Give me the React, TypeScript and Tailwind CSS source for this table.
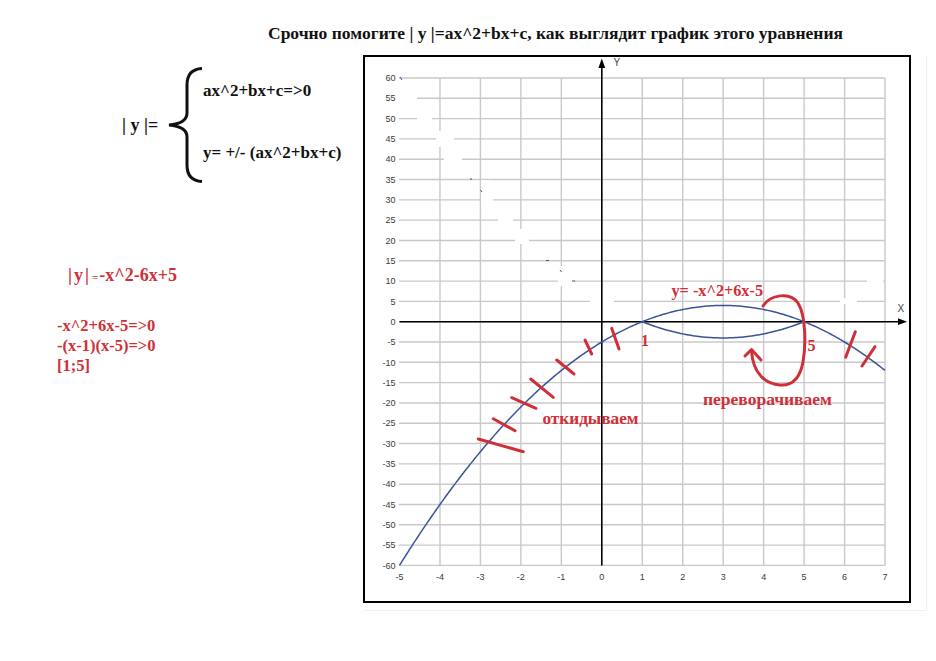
import React from "react";

const RED = "#cf2f37";
const BLUE = "#3a539b";

const X = (v: number) => 601.8 + 40.46 * v;
const Y = (v: number) => 321.7 - 4.062 * v;

function curve(f: (x: number) => number, a: number, b: number, step = 0.05) {
  let d = "";
  for (let x = a; x <= b + 1e-9; x += step) {
    d += (d ? " L" : "M") + X(x).toFixed(2) + "," + Y(f(x)).toFixed(2);
  }
  return d;
}

const yVals: number[] = [];
for (let v = 60; v >= -60; v -= 5) yVals.push(v);
const xVals = [-5, -4, -3, -2, -1, 0, 1, 2, 3, 4, 5, 6, 7];

const patches: [number, number, number, number][] = [
  [399, 94, 18, 7],
  [417, 115, 15, 7],
  [436, 131, 18, 16],
  [444, 154, 18, 8],
  [481, 180, 12, 24],
  [498, 216, 15, 8],
  [515, 229, 14, 15],
  [558, 266, 16, 20],
  [590, 297, 24, 10],
  [840, 298, 17, 6],
  [867, 277, 16, 6],
];

const dots: [number, number, number, number][] = [
  [400, 77, 402, 80],
  [470, 178.5, 472, 179.5],
  [480.5, 190, 482, 192],
  [546, 260.5, 549, 260.5],
  [560, 270, 561.5, 272],
  [572, 281, 575, 281],
];

const ticks: [number, number, number, number][] = [
  [611.7, 328.3, 619, 349],
  [585, 340, 591.7, 354],
  [556.7, 360, 574, 374],
  [530.7, 379, 553.3, 397.3],
  [511.7, 397.7, 536, 408.3],
  [493.3, 418.7, 515, 430.7],
  [478.3, 439, 523.3, 451.7],
  [845.7, 357.3, 855.3, 331.7],
  [862, 366, 875, 346.7],
];

function Chart() {
  const f = (x: number) => -x * x + 6 * x - 5;
  const g = (x: number) => x * x - 6 * x + 5;
  return (
    <svg width={544} height={544} viewBox="365 57 544 544" className="block">
      {yVals.map((v) => (
        <line key={"h" + v} x1={399} x2={X(7)} y1={Y(v)} y2={Y(v)} stroke="#c9c9c9" strokeWidth={1.4} />
      ))}
      {xVals
        .filter((v) => v !== -5 && v !== 0)
        .map((v) => (
          <line key={"v" + v} x1={X(v)} x2={X(v)} y1={Y(60)} y2={Y(-60)} stroke="#c9c9c9" strokeWidth={1.4} />
        ))}
      {patches.map(([x, y, w, h], i) => (
        <rect key={"p" + i} x={x} y={y} width={w} height={h} fill="#ffffff" />
      ))}
      {dots.map(([x1, y1, x2, y2], i) => (
        <line key={"d" + i} x1={x1} y1={y1} x2={x2} y2={y2} stroke={BLUE} strokeWidth={1} />
      ))}
      {yVals.map((v) => (
        <text
          key={"yl" + v}
          x={395.5}
          y={Y(v) + 3.2}
          textAnchor="end"
          fontSize={9}
          fill="#3a3a3a"
          fontFamily="'Liberation Sans', Arial, sans-serif"
        >
          {v}
        </text>
      ))}
      {xVals.map((v) => (
        <text
          key={"xl" + v}
          x={X(v)}
          y={580}
          textAnchor="middle"
          fontSize={9}
          fill="#3a3a3a"
          fontFamily="'Liberation Sans', Arial, sans-serif"
        >
          {v}
        </text>
      ))}
      <line x1={399.5} x2={900} y1={Y(0)} y2={Y(0)} stroke="#000" strokeWidth={1.6} />
      <polygon points={`907,${Y(0)} 898,${Y(0) - 3.4} 898,${Y(0) + 3.4}`} fill="#000" />
      <line x1={X(0)} x2={X(0)} y1={Y(-60)} y2={66} stroke="#000" strokeWidth={1.6} />
      <polygon points={`${X(0)},58.5 ${X(0) - 3.4},68 ${X(0) + 3.4},68`} fill="#000" />
      <text x={613.5} y={65.5} fontSize={10} fill="#444" fontFamily="'Liberation Sans', Arial, sans-serif">
        Y
      </text>
      <text x={897.5} y={312} fontSize={10} fill="#444" fontFamily="'Liberation Sans', Arial, sans-serif">
        X
      </text>
      <path d={curve(f, -5, 7)} fill="none" stroke={BLUE} strokeWidth={1.5} />
      <path d={curve(g, 1, 5)} fill="none" stroke={BLUE} strokeWidth={1.5} />
      {ticks.map(([x1, y1, x2, y2], i) => (
        <line key={"t" + i} x1={x1} y1={y1} x2={x2} y2={y2} stroke={RED} strokeWidth={3} strokeLinecap="round" />
      ))}
      <path
        d="M763,306 C770,295 790,291 798,303 C806,316 806,345 803,362 C800,378 792,386 780,385 C766,384 753,374 751.5,351"
        fill="none"
        stroke={RED}
        strokeWidth={3}
        strokeLinecap="round"
      />
      <path d="M745,356 L751.5,349.5 L761,360" fill="none" stroke={RED} strokeWidth={3} strokeLinecap="round" strokeLinejoin="round" />
      <g fill={RED} fontFamily="'Liberation Serif', 'Times New Roman', serif" fontWeight="bold" fontSize={16}>
        <text x={671.5} y={295.5} textLength={91.5} lengthAdjust="spacingAndGlyphs">
          y= -x^2+6x-5
        </text>
        <text x={641} y={346}>1</text>
        <text x={807.5} y={351}>5</text>
        <text x={703} y={405} textLength={129} lengthAdjust="spacingAndGlyphs">
          переворачиваем
        </text>
        <text x={542.5} y={423.5} textLength={96} lengthAdjust="spacingAndGlyphs">
          откидываем
        </text>
      </g>
    </svg>
  );
}

function Brace() {
  return (
    <svg width={37} height={116} viewBox="0 0 37 116" className="block shrink-0">
      <path
        d="M36,1.5 C25,2 21,8 21,18 L21,46 C21,53 15,57 3,58 C15,59 21,63 21,70 L21,98 C21,108 25,114 36,114.5"
        fill="none"
        stroke="#111"
        strokeWidth={3}
      />
    </svg>
  );
}

export default function App() {
  return (
    <div className="w-[936px] h-[661px] bg-white overflow-hidden font-['Liberation_Serif','Times_New_Roman',serif] text-[#111]">
      <div className="pt-[23px] pl-[268px] text-[17.5px] leading-[20px] font-bold whitespace-nowrap">
        Срочно помогите | y |=ax^2+bx+c, как выглядит график этого уравнения
      </div>
      <div className="flex mt-[12px] items-start">
        <div className="w-[363px] shrink-0 font-bold">
          <div className="flex items-center mt-[12px]">
            <div className="ml-[122px] w-[44px] text-[18px] leading-[20px] whitespace-nowrap">| y |=</div>
            <Brace />
            <div className="self-start pt-[14px] flex flex-col gap-[42px] text-[17px] leading-[20px] whitespace-nowrap">
              <div>ax^2+bx+c=&gt;0</div>
              <div>y= +/- (ax^2+bx+c)</div>
            </div>
          </div>
          <div className="mt-[82px] pl-[68px] text-[#cf2f37] text-[18px] leading-[20px] whitespace-nowrap">
            <span className="tracking-[2px]">|y|</span>
            <span className="text-[11px] ml-[1px] mr-[1px]">=</span>
            <span>-x^2-6x+5</span>
          </div>
          <div className="mt-[29px] pl-[57px] text-[#cf2f37] text-[16.5px] leading-[20px] whitespace-nowrap">
            <div>-x^2+6x-5=&gt;0</div>
            <div>-(x-1)(x-5)=&gt;0</div>
            <div>[1;5]</div>
          </div>
        </div>
        <div className="pr-[15px] pb-[7px] border-r border-b border-[#efefef]">
          <div className="w-[548px] h-[548px] border-2 border-black">
            <Chart />
          </div>
        </div>
      </div>
    </div>
  );
}
